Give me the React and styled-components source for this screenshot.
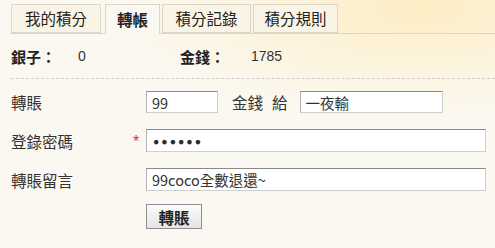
import styled, { createGlobalStyle } from "styled-components";

const Global = createGlobalStyle`
  html, body {
    margin: 0;
    padding: 0;
    background: #fbf8f1;
  }
  body {
    font-family: "Noto Sans CJK TC", "Liberation Sans", sans-serif;
    color: #333;
  }
`;

const Page = styled.div`
  width: 495px;
  height: 248px;
  overflow: hidden;
  background:
    radial-gradient(ellipse 320px 110px at 420px 10px, #fdedc4 0%, rgba(253, 240, 205, 0.6) 45%, rgba(251, 248, 241, 0) 100%),
    #fbf8f1;
`;

const TabBar = styled.div`
  display: flex;
  gap: 2px;
  margin-left: 11px;
  padding-top: 4px;
  height: 29px;
  border-bottom: 1px solid #dcd6c8;
  box-sizing: content-box;
`;

const Tab = styled.div`
  width: ${(p) => p.$w}px;
  margin-left: ${(p) => p.$ml || 0}px;
  box-sizing: border-box;
  height: ${(p) => (p.$active ? 30 : 29)}px;
  border: 1px solid #dcd6c8;
  border-bottom: ${(p) => (p.$active ? "none" : "1px solid #dcd6c8")};
  background: ${(p) => (p.$active ? "#fbf8f1" : "#faf4e6")};
  display: flex;
  align-items: center;
  justify-content: center;
  font-size: 15.5px;
  font-weight: ${(p) => (p.$active ? 700 : 400)};
  color: #222;
  line-height: 1;
`;

const Info = styled.div`
  display: flex;
  align-items: center;
  height: 44px;
  margin-left: 11px;
  border-bottom: 1px dashed #cfcfcf;
  font-size: 15px;
`;

const InfoLabel = styled.span`
  font-weight: 700;
  color: #222;
  width: ${(p) => p.$w}px;
`;

const InfoValue = styled.span`
  font-family: "Liberation Sans", sans-serif;
  font-size: 14px;
  width: ${(p) => p.$w || "auto"}px;
  color: #333;
`;

const Form = styled.div`
  display: grid;
  grid-template-columns: 122px 13px auto;
  margin-left: 11px;
  padding-top: 12px;
`;

const Row = styled.div`
  display: contents;
`;

const Gap = styled.div`
  grid-column: 1 / -1;
  height: ${(p) => p.$h}px;
`;

const Label = styled.div`
  font-size: 15.5px;
  height: ${(p) => p.$h}px;
  display: flex;
  align-items: center;
  color: #333;
`;

const Star = styled.div`
  color: #e03030;
  font-family: "Liberation Sans", sans-serif;
  font-size: 16px;
  display: flex;
  align-items: center;
  padding-top: 3px;
`;

const Field = styled.div`
  display: flex;
  align-items: center;
  height: ${(p) => p.$h}px;
`;

const Input = styled.input`
  box-sizing: border-box;
  width: ${(p) => p.$w}px;
  height: ${(p) => p.$h || 22}px;
  border: 1px solid #cfcfcf;
  border-top-color: #8a8a8a;
  border-left-color: #b0b0b0;
  background: #fff;
  padding: 0 5px;
  font-family: "Noto Sans CJK TC", "Liberation Sans", sans-serif;
  font-size: 14.5px;
  color: #333;
  outline: none;
  margin: 0;
`;

const Dots = styled(Input)`
  font-family: "Liberation Sans", sans-serif;
  font-size: 10.5px;
  letter-spacing: 2px;
  color: #2a2a2a;
  padding-left: 6px;
`;

const Word = styled.span`
  font-size: 15.5px;
  margin: ${(p) => p.$m};
  color: #333;
`;

const Button = styled.button`
  box-sizing: border-box;
  width: 56px;
  height: 25px;
  border: 1px solid #8e8e8e;
  background: linear-gradient(#fbfbfb, #e4e4e4);
  font-family: "Noto Sans CJK TC", sans-serif;
  font-size: 15.5px;
  font-weight: 700;
  color: #222;
  padding: 0;
  margin: 0;
`;

export default function App() {
  return (
    <Page>
      <Global />
      <TabBar>
        <Tab $w={90}>我的積分</Tab>
        <Tab $w={55} $ml={2} $active>轉帳</Tab>
        <Tab $w={89}>積分記錄</Tab>
        <Tab $w={85}>積分規則</Tab>
      </TabBar>
      <Info>
        <InfoLabel $w={67}>銀子：</InfoLabel>
        <InfoValue $w={102}>0</InfoValue>
        <InfoLabel $w={71}>金錢：</InfoLabel>
        <InfoValue>1785</InfoValue>
      </Info>
      <Form>
        <Row>
          <Label $h={22}>轉賬</Label>
          <div />
          <Field $h={22}>
            <Input $w={72} defaultValue="99" />
            <Word $m="0 0 0 14px">金錢</Word>
            <Word $m="0 12px 0 9px">給</Word>
            <Input $w={143} defaultValue="一夜輸" />
          </Field>
        </Row>
        <Gap $h={16} />
        <Row>
          <Label $h={23}>登錄密碼</Label>
          <Star>*</Star>
          <Field $h={23}>
            <Dots $w={340} $h={23} readOnly value="●●●●●●" />
          </Field>
        </Row>
        <Gap $h={16} />
        <Row>
          <Label $h={23}>轉賬留言</Label>
          <div />
          <Field $h={23}>
            <Input $w={340} $h={23} defaultValue="99coco全數退還~" />
          </Field>
        </Row>
        <Gap $h={13} />
        <Row>
          <div />
          <div />
          <Field $h={25}>
            <Button>轉賬</Button>
          </Field>
        </Row>
      </Form>
    </Page>
  );
}
